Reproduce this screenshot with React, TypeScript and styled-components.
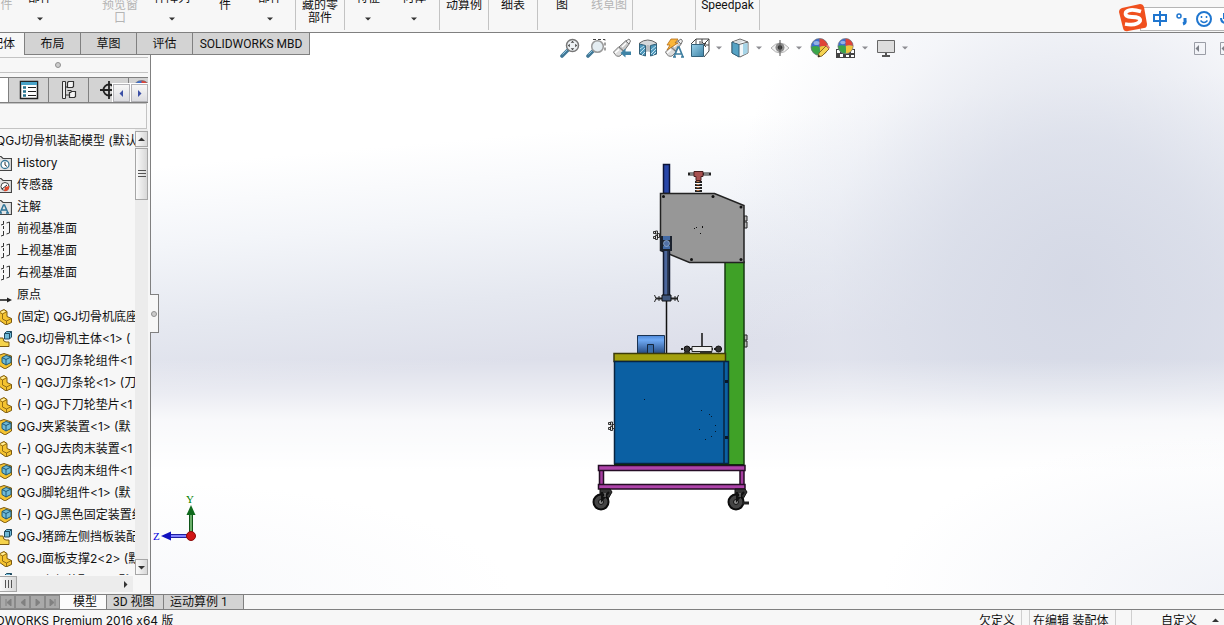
import React from "react";
import styled, { createGlobalStyle } from "styled-components";

const GlobalStyle = createGlobalStyle`
  * { box-sizing: border-box; }
  body {
    margin: 0;
    overflow: hidden;
    background: #f7f7f7;
    color: #111;
    font-family: Roboto, "Noto Sans CJK SC", sans-serif;
    font-size: 12px;
    line-height: 16px;
  }
  button {
    margin: 0;
    padding: 0;
    border: 0;
    background: none;
    color: inherit;
    font: inherit;
    white-space: nowrap;
  }
  svg { display: block; }
`;

const Window = styled.div`
  position: relative;
  display: grid;
  grid-template-rows: 33px minmax(0, 1fr) 16px 15px;
  height: 100vh;
  overflow: hidden;
`;

/* ---------- ribbon ---------- */

const Ribbon = styled.header`
  display: flex;
  height: 33px;
  padding-bottom: 2px;
  overflow: hidden;
  background: #f7f7f7;
  border-bottom: 1px solid #808080;
`;

const RibbonGroup = styled.div<{ $width: number }>`
  display: flex;
  flex: none;
  width: ${(p) => p.$width}px;
  border-right: 1px solid #c3c3c3;
`;

const RibbonButton = styled.button<{ $width: number; $muted?: boolean; $menu?: boolean }>`
  display: flex;
  flex: none;
  flex-direction: column;
  align-items: center;
  gap: 12px;
  width: ${(p) => p.$width}px;
  margin-top: ${(p) => (p.$menu ? -8 : -1)}px;
  color: ${(p) => (p.$muted ? "#b4b4b4" : "#111")};
  line-height: 13px;
  white-space: pre-line;
`;

type Command = { text: string; width: number; muted?: boolean; menu?: boolean };

const ribbon: { width: number; items: Command[] }[] = [
  {
    width: 296,
    items: [
      { text: "件", width: 13, muted: true },
      { text: "部件", width: 54, menu: true },
      { text: "", width: 29 },
      { text: "预览窗\n口", width: 48, muted: true },
      { text: "件阵列", width: 56, menu: true },
      { text: "件", width: 50 },
      { text: "部件", width: 40, menu: true },
    ],
  },
  { width: 49, items: [{ text: "藏的零\n部件", width: 48 }] },
  {
    width: 95,
    items: [
      { text: "特征", width: 46, menu: true },
      { text: "何体", width: 46, menu: true },
    ],
  },
  { width: 49, items: [{ text: "动算例", width: 48 }] },
  { width: 49, items: [{ text: "细表", width: 48 }] },
  {
    width: 95,
    items: [
      { text: "图", width: 48 },
      { text: "线草图", width: 46, muted: true },
    ],
  },
  { width: 63, items: [] },
  { width: 64, items: [{ text: "Speedpak", width: 63 }] },
];

const Caret = ({ color = "#333" }: { color?: string }) => (
  <svg width="6" height="4" viewBox="0 0 6 4" aria-hidden="true">
    <path d="M0 .5h6L3 3.5z" fill={color} />
  </svg>
);

/* ---------- input method bar ---------- */

const ImeBar = styled.div`
  position: absolute;
  top: 4px;
  right: 0;
  display: flex;
  width: 105px;
  height: 29px;
`;

const ImeKeys = styled.div`
  flex: 1;
  height: 24px;
  margin: 3px 0 0 -8px;
  overflow: hidden;
  background: #fff;
  border: 1px solid #b5b5b5;
  border-right: 0;
`;

const ImeBadge = styled.div`
  position: relative;
  z-index: 1;
`;

/* ---------- workspace ---------- */

const Workspace = styled.main`
  position: relative;
  display: flex;
  flex-direction: column;
  min-height: 0;
  background:
    radial-gradient(ellipse 28% 28% at 100% 100%, rgba(232, 235, 243, 0.6), rgba(255, 255, 255, 0)),
    radial-gradient(ellipse 30% 20% at 12% 100%, rgba(240, 242, 247, 0.5), rgba(255, 255, 255, 0)),
    linear-gradient(to bottom, rgba(255, 255, 255, 0) 58%, rgba(255, 255, 255, 0.4) 64%, rgba(255, 255, 255, 0.8) 69%, #fff 78%),
    radial-gradient(ellipse 29% 72% at 88% 44%, rgba(212, 216, 229, 0.95) 0%, rgba(216, 220, 232, 0.8) 35%, rgba(228, 231, 240, 0.4) 70%, rgba(255, 255, 255, 0) 100%),
    linear-gradient(175deg, #fff 22%, #f3f5f9 34%, #e5e8f0 46%, #dddfea 56%, #dddfea 100%);
`;

const TopRow = styled.div`
  display: flex;
  flex: none;
  height: 22px;
`;

const CommandTab = styled.button<{ $width: number; $active?: boolean }>`
  flex: none;
  width: ${(p) => p.$width}px;
  height: ${(p) => (p.$active ? 22 : 23)}px;
  margin-top: ${(p) => (p.$active ? 0 : -1)}px;
  overflow: hidden;
  background: ${(p) => (p.$active ? "#f7f7f7" : "#d3d3d3")};
  border: ${(p) => (p.$active ? 0 : "1px solid #808080")};
  border-left: 0;
  box-shadow: ${(p) => (p.$active ? "inset -1px 0 #808080" : "none")};
`;

const ActiveLabel = styled.span`
  display: block;
  margin-left: -9px;
  text-align: left;
`;

const ViewTools = styled.div`
  display: flex;
  flex: none;
  align-items: center;
  height: 20px;
  margin: 5px 0 0 247px;
`;

const ToolButton = styled.button`
  display: flex;
  justify-content: center;
  width: 26px;
`;

const MenuButton = styled.button`
  width: 14px;
  padding-left: 3px;
`;

const PaneButtons = styled.div`
  display: flex;
  gap: 14px;
  width: 30px;
  margin: 8px 0 0 auto;
  overflow: hidden;
  button { flex: none; }
`;

const Split = styled.div`
  display: flex;
  flex: 1;
  min-height: 0;
`;

const Panel = styled.aside`
  position: relative;
  display: flex;
  flex: none;
  flex-direction: column;
  width: 151px;
  padding: 2px 2px 0 0;
  background: #f7f7f7;
  border-right: 1px solid #808080;
`;

const Grip = styled.div`
  display: flex;
  flex: none;
  align-items: center;
  justify-content: center;
  height: 16px;
  padding-right: 32px;
  border: solid #c3c3c3;
  border-width: 1px 0;
`;

const Dot = styled.span`
  width: 6px;
  height: 6px;
  background: #ccc;
  border: 1px solid #909090;
  border-radius: 50%;
`;

const PanelTabs = styled.div`
  position: relative;
  display: flex;
  flex: none;
  height: 26px;
  margin-top: 4px;
  overflow: hidden;
  border: solid #808080;
  border-width: 1px 0;
`;

const PanelTab = styled.button<{ $width?: number }>`
  display: flex;
  flex: none;
  align-items: center;
  justify-content: center;
  width: ${(p) => p.$width ?? 40}px;
  background: ${(p) => (p.$width ? "#fff" : "#d3d3d3")};
  border-right: 1px solid #808080;
`;

const PeekTab = styled(PanelTab)`
  justify-content: flex-start;
  padding-left: 3px;
`;

const TabScroller = styled.div`
  position: absolute;
  right: 0;
  bottom: 0;
  display: flex;
  gap: 1px;
  padding: 1px 0 0 1px;
  background: #fff;
`;

const TabScrollButton = styled.button`
  display: flex;
  align-items: center;
  justify-content: center;
  width: 17px;
  height: 18px;
  background: linear-gradient(#f8f8f8, #dcdce0);
  border: 1px solid #b4b4b8;
`;

const Filter = styled.div`
  flex: none;
  height: 26px;
  margin-right: 1px;
  border: solid #c3c3c3;
  border-width: 1px 1px 1px 0;
`;

const TreeArea = styled.div`
  display: flex;
  flex: 1;
  min-height: 0;
  padding-bottom: 1px;
`;

const Tree = styled.ul`
  flex: 1;
  min-width: 0;
  margin: 0;
  padding: 1px 0 0;
  overflow: hidden;
  font-family: Inter, "Noto Sans CJK SC", sans-serif;
  list-style: none;
`;

const TreeRow = styled.li`
  display: flex;
  align-items: center;
  gap: 5px;
  height: 22px;
  margin-left: -4px;
  white-space: pre;
  svg { flex: none; }
`;

const VScroll = styled.div`
  display: flex;
  flex: none;
  flex-direction: column;
  width: 13px;
  padding-top: 2px;
  background: #ececec;
`;

const ScrollButton = styled.button`
  display: flex;
  flex: none;
  align-items: center;
  justify-content: center;
  height: 16px;
  background: linear-gradient(90deg, #fafafa, #d8d8d8);
  border: 1px solid #a6a6a6;
`;

const VThumb = styled(ScrollButton)`
  height: 52px;
  margin: 1px 0 auto;
`;

const HScroll = styled.div`
  display: flex;
  flex: none;
  align-items: center;
  justify-content: space-between;
  height: 16px;
  margin: 0 15px 2px 0;
  padding-right: 4px;
  background: #ececec;
`;

const HThumb = styled(ScrollButton)`
  width: 17px;
  border-left: 0;
`;

const Handle = styled.button`
  position: absolute;
  top: 239px;
  left: 150px;
  display: flex;
  align-items: center;
  width: 9px;
  height: 39px;
  padding-left: 1px;
  background: #f7f7f7;
  border: 1px solid #808080;
  border-left: 0;
`;

const Canvas = styled.section`
  position: relative;
  flex: 1;
`;

const Placed = styled.div<{ $left: number; $top: number }>`
  position: absolute;
  left: ${(p) => p.$left}px;
  top: ${(p) => p.$top}px;
`;

/* ---------- bottom bars ---------- */

const SheetBar = styled.nav`
  display: flex;
  background: #f7f7f7;
  border: solid #808080;
  border-width: 1px 0;
`;

const SheetNav = styled.button`
  display: flex;
  align-items: center;
  justify-content: center;
  width: 15px;
  background: #a9a9a9;
  border: 1px solid #8a8a8a;
`;

const SheetTab = styled.button<{ $width: number; $active?: boolean }>`
  width: ${(p) => p.$width}px;
  padding: ${(p) => (p.$active ? "0 0 0 4px" : "0 0 0 6px")};
  overflow: hidden;
  line-height: 12px;
  text-align: ${(p) => (p.$active ? "center" : "left")};
  background: ${(p) => (p.$active ? "#fbfbfb" : "#d3d3d3")};
  border-right: 1px solid #808080;
`;

const StatusBar = styled.footer`
  display: flex;
  height: 15px;
  overflow: hidden;
  font-family: Inter, "Noto Sans CJK SC", sans-serif;
  font-variant-ligatures: none;
  line-height: 21px;
  white-space: nowrap;
  background: #f7f7f7;
`;

const Product = styled.span`
  flex: 1;
  margin-left: -4px;
`;

const StatusCell = styled.span<{ $width: number }>`
  width: ${(p) => p.$width}px;
  height: 15px;
  padding-left: 3px;
  border-right: 1px solid #cfcfcf;
`;

const UnitsButton = styled.button`
  display: flex;
  align-items: center;
  justify-content: space-between;
  width: 92px;
  height: 21px;
  padding: 0 5px 0 29px;
`;

/* ---------- icons ---------- */

const Icon = ({ size = 20, children }: { size?: number; children: React.ReactNode }) => (
  <svg width={size} height={size} viewBox={`0 0 ${size} ${size}`} fill="none" aria-hidden="true">
    {children}
  </svg>
);

const ZoomFit = () => (
  <Icon>
    <path d="M2 18l6-6" stroke="#3f7796" strokeWidth="3.6" strokeLinecap="round" />
    <path d="M2.5 16.5l5-5" stroke="#8fc3dd" strokeWidth="1" />
    <circle cx="12.500" cy="7.500" r="6" fill="#eef2f5" stroke="#777" strokeWidth="1.500" />
    <path d="M12.500 2.800l1.800 2h-3.600zM12.500 12.200l1.800-2h-3.600zM7.800 7.500l2-1.800v3.600zM17.200 7.500l-2-1.800v3.600z" fill="#444" />
  </Icon>
);

const ZoomArea = () => (
  <Icon>
    <path d="M7 1.500h12v12" stroke="#444" strokeDasharray="3 2" />
    <path d="M2 18l5-5" stroke="#3f7796" strokeWidth="3.600" strokeLinecap="round" />
    <path d="M2.500 16.500l4-4" stroke="#8fc3dd" />
    <circle cx="11.500" cy="8.500" r="5.800" fill="#e4edf2" stroke="#999" strokeWidth="1.500" />
  </Icon>
);

const Scope = () => (
  <>
    <path d="M1.500 14l5-5 5.500 5-4 4q-4 1.500-6.500-4z" fill="#ddd" stroke="#777" />
    <path d="M7 9l7-6.500 3.500 3L12 13z" fill="#c8c8c8" stroke="#777" />
    <path d="M14 3l3-2 1.500 2-1.500 3z" fill="#eee" stroke="#777" />
    <path d="M3 15l4-3.500M10 9l4-4" stroke="#fff" strokeWidth="1.500" />
  </>
);

const PrevView = () => (
  <Icon>
    <Scope />
    <path d="M8.500 15l5-4.500v3H19v3.500h-5.500v2.500z" fill="#3f84a6" />
  </Icon>
);

const Section = () => (
  <Icon>
    <path d="M1.500 5q8-6 17 0v11l-6 1V9q-3-2-5 0v8l-6-1z" fill="#d6d8da" stroke="#666" />
    <path d="M7.500 8.500q2.500-3 5 0v6q-2.500-2-5 0z" fill="#b9bdc0" />
    <path d="M1.500 6l6 1.500V18l-6-2zM12.500 7.500l6-1.500v10l-6 2z" fill="#4d97bb" stroke="#33617a" />
    <path d="M2 11l4-3M2 15l5-5M4 17l3-3M13 12l5-4M13 16l5-5M15 17l3-3" stroke="#c4e2ef" />
  </Icon>
);

const Dynamic = () => (
  <Icon>
    <Scope />
    <path d="M7 1h7l-3 4h3L3 12l3-5H3z" fill="#fbb63a" stroke="#b16d1c" strokeWidth=".8" />
    <path d="M10 19l4-10h1l4 10M12 16h5M9 19h3M17 19h3" stroke="#3d7d9f" strokeWidth="1.700" />
  </Icon>
);

const Orientation = () => (
  <Icon>
    <path d="M1 6l5-5h13v12l-5 6M14 6l5-5M6 1v5M12 1v8M19 7h-5M10 6V3" stroke="#444" />
    <path d="M1.500 6.500h12v12h-12z" fill="url(#orientFace)" stroke="#33617a" />
    <path d="M12 4l2 2 2-2M16 9l-2-2 2-2" stroke="#444" />
    <defs>
      <linearGradient id="orientFace" x2="1" y2="1">
        <stop stopColor="#9bd2ea" />
        <stop offset="1" stopColor="#3e83a6" />
      </linearGradient>
    </defs>
  </Icon>
);

const Display = () => (
  <Icon>
    <path d="M2 4l8-3 8 3v11l-8 4-8-4z" fill="#f3f7f9" stroke="#666" />
    <path d="M2 4l7 2.500V19l-7-4z" fill="#55a2c4" stroke="#33617a" />
    <path d="M9 6.500L18 4" stroke="#666" />
    <path d="M13 6v11l4.500-2V5z" fill="#a5d4e7" />
    <path d="M3 4l7-2 3 1-4 2.500z" fill="#d9dcde" />
  </Icon>
);

const Eye = () => (
  <Icon>
    <path d="M1 10q9-10 18 0-9 10-18 0z" fill="#f2f2f2" stroke="#b0b0b0" />
    <circle cx="10" cy="9.500" r="4.500" fill="#8b8b8b" />
    <circle cx="10" cy="9.500" r="2.200" fill="#333" />
    <path d="M10 2v16" stroke="#555" />
  </Icon>
);

const Ball = () => (
  <g>
    <circle cx="9.500" cy="9" r="8.500" fill="#3b6fd0" />
    <path d="M9.500 9V.5a8.500 8.500 0 0 1 8.500 8.500q-4-2-8.500 0z" fill="#e04438" />
    <path d="M9.500 9q4-2 8.500 0a8.500 8.500 0 0 1-8.500 8.500q1-4 0-8.500z" fill="#f1c63c" />
    <path d="M9.500 9q-4-2-8.500 0a8.500 8.500 0 0 0 8.500 8.500q1-4 0-8.500z" fill="#3ba548" />
    <circle cx="9.500" cy="9" r="8.500" stroke="#777" strokeWidth=".7" />
    <ellipse cx="6.500" cy="5" rx="3" ry="2" fill="#fff" opacity=".45" />
  </g>
);

const Appearance = () => (
  <Icon>
    <Ball />
    <path d="M8 19l1-4 7-7 3 3-7 7z" fill="#f5d352" stroke="#7a5b20" strokeWidth=".9" />
    <path d="M16 8l1.500-1.500 2.500 3-1 1.500z" fill="#e47f76" />
    <path d="M8 19l.6-2.400 1.800 1.800z" fill="#222" />
  </Icon>
);

const Scene = () => (
  <Icon>
    <path d="M0 11h19v9H0z" fill="#444" />
    <path d="M1 12h3v3H1zM15 12h3v3h-3zM4 16h3v3H4zM10 17h3v2h-3zM15 17h3v2h-3z" fill="#fff" />
    <g transform="translate(1 0) scale(.9)">
      <Ball />
    </g>
  </Icon>
);

const Monitor = () => (
  <Icon>
    <path d="M1.500 2.500h17v12h-17z" fill="#ddd" stroke="#666" />
    <path d="M10 15v2M6 18h8" stroke="#555" strokeWidth="2" />
  </Icon>
);

const PaneIcon = () => (
  <svg width="12" height="13" viewBox="0 0 12 13" fill="none" aria-hidden="true">
    <path d="M.5.5h11v12H.5z" stroke="#9a9da6" />
    <path d="M5 3v7L1.500 6.500z" fill="#7d8088" />
  </svg>
);

const Arrow = ({ dir, color = "#333" }: { dir: "left" | "right" | "up" | "down"; color?: string }) => {
  const d = { left: "M5 0v7L1.500 3.500z", right: "M2 0v7l3.500-3.500z", up: "M0 5h7L3.500 1.500z", down: "M0 2h7L3.500 5.500z" }[dir];
  return (
    <svg width="7" height="7" viewBox="0 0 7 7" aria-hidden="true">
      <path d={d} fill={color} />
    </svg>
  );
};

const Bars = ({ upright }: { upright?: boolean }) => (
  <svg width="8" height="8" viewBox="0 0 8 8" stroke="#555" aria-hidden="true">
    <path d={upright ? "M1.500 0v8M4.500 0v8M7.500 0v8" : "M0 .5h8M0 3.500h8M0 6.500h8"} />
  </svg>
);

const folder = <path d="M-1 1.500h6l2 2h8.500v12H-1z" fill="#e4e4e4" stroke="#444" strokeWidth="1.200" />;

const treeIcons: Record<string, React.ReactNode> = {
  history: (
    <>
      {folder}
      <circle cx="9" cy="9.500" r="4" fill="#fff" stroke="#3b7897" strokeWidth="1.300" />
      <path d="M9 7v3l2 1.500" stroke="#333" />
    </>
  ),
  sensor: (
    <>
      {folder}
      <circle cx="9" cy="9.500" r="4" fill="#fff" stroke="#444" />
      <path d="M13 9a4 4 0 0 1-5 5l1-4z" fill="#e0492d" />
      <path d="M6 12l5-4" stroke="#222" />
    </>
  ),
  note: (
    <>
      {folder}
      <path d="M4 14l3.500-8h1L12 14M6 11h4M3 14h3M10 14h3" stroke="#2f7498" strokeWidth="1.500" />
    </>
  ),
  plane: <path d="M13.500 1v11M13.500 1l-3 1M8 3L5 4M2 5v2M2 9v3M13.500 12l-3 1M8 14l-3 1M7.500 0v3m0 2v3m0 2v4" stroke="#333" />,
  origin: (
    <>
      <path d="M0 13h12" stroke="#222" strokeWidth="1.600" />
      <path d="M11 10.500l5 2.500-5 2.500z" fill="#222" />
    </>
  ),
  part: (
    <>
      <path d="M3 3l5-2.500 3 2v5l4.500 2v4L10 16 3 11z" fill="#f5c330" stroke="#7c5a10" />
      <path d="M3 3l3.500 2v5l4 2M6.500 5L11 2.500M10.500 12l5-2.500M10.500 12v4" stroke="#7c5a10" strokeWidth=".8" />
      <path d="M4.500 3l3.500-1.500L9.500 2.500 6.500 4z" fill="#fff0a5" />
    </>
  ),
  assembly: (
    <>
      <path d="M1 3l7-2.500 7.500 2.500v9L9 16l-8-5z" fill="#f5c330" stroke="#7c5a10" />
      <path d="M6 4.500l4-2 5 1.500v5.500l-5 2.500-4-2.500z" fill="#70bad8" stroke="#1e5876" />
      <path d="M6 4.500l4 2 5-2.500M10 6.500V12" stroke="#1e5876" />
    </>
  ),
  flexible: (
    <>
      <path d="M1 7h6q0 4 3 4h3v4.500H1z" fill="#f5d34b" stroke="#7c5a10" />
      <path d="M8.500 2.500l2-2h5v5.500l-2 2h-5z" fill="#70bad8" stroke="#1e4a60" />
      <path d="M8.500 2.500h5l2-2M13.500 2.500V8" stroke="#1e4a60" />
    </>
  ),
};

const tree: { kind?: string; text: string }[] = [
  { text: "QGJ切骨机装配模型 (默认" },
  { kind: "history", text: "History" },
  { kind: "sensor", text: "传感器" },
  { kind: "note", text: "注解" },
  { kind: "plane", text: "前视基准面" },
  { kind: "plane", text: "上视基准面" },
  { kind: "plane", text: "右视基准面" },
  { kind: "origin", text: "原点" },
  { kind: "part", text: "(固定) QGJ切骨机底座" },
  { kind: "flexible", text: "QGJ切骨机主体<1> (" },
  { kind: "assembly", text: "(-) QGJ刀条轮组件<1" },
  { kind: "part", text: "(-) QGJ刀条轮<1> (刀" },
  { kind: "part", text: "(-) QGJ下刀轮垫片<1" },
  { kind: "assembly", text: "QGJ夹紧装置<1> (默" },
  { kind: "part", text: "(-) QGJ去肉末装置<1" },
  { kind: "assembly", text: "(-) QGJ去肉末组件<1" },
  { kind: "assembly", text: "QGJ脚轮组件<1> (默" },
  { kind: "assembly", text: "(-) QGJ黑色固定装置组" },
  { kind: "flexible", text: "QGJ猪蹄左侧挡板装配" },
  { kind: "part", text: "QGJ面板支撑2<2> (默" },
  { kind: "flexible", text: "QGJ上部装配<1> (默" },
];

/* ---------- model ---------- */

const Caster = ({ x }: { x: number }) => (
  <g transform={`translate(${x} 0)`}>
    <path d="M-1 489h10l2 3-4 7-8 4z" fill="#333" stroke="#111" />
    <circle cx="0" cy="502" r="7.500" fill="#444" stroke="#0c0c0c" strokeWidth="2" />
    <circle cx="0" cy="502" r="2.500" fill="#888" stroke="#111" />
    <path d="M1 492v8l7-8" stroke="#111" strokeWidth="2" />
    <path d="M4 493v4" stroke="#999" />
  </g>
);

const Clip = ({ x, y }: { x: number; y: number }) => (
  <g transform={`translate(${x} ${y})`}>
    <path d="M0 1h2v2H0zM0 6h2v2H0zM2 .5h2v3H2zM2 5h2v4H2zM4 3h2v4H4z" fill="#ddd" stroke="#222" strokeWidth=".9" />
  </g>
);

const Machine = () => (
  <svg width="170" height="355" viewBox="590 160 170 355" fill="none" role="img" aria-label="切骨机侧视图">
    <defs>
      <linearGradient id="motor" x2="0" y2="1">
        <stop stopColor="#4d87d6" />
        <stop offset=".25" stopColor="#6faaf5" />
        <stop offset="1" stopColor="#254a82" />
      </linearGradient>
    </defs>
    <path d="M663.500 164.500h6v29h-6z" fill="#2846a8" stroke="#0c1438" strokeWidth="1.500" />
    <path d="M688 174h23" stroke="#222" strokeWidth="3" />
    <path d="M690 174h4M704 174h5" stroke="#ddd" />
    <path d="M694 171.500h9v5h-2v4h-5v-4h-2z" fill="#a85050" stroke="#491e1e" />
    <path d="M698.500 181v12" stroke="#222" strokeWidth="7" strokeDasharray="2 1" />
    <path d="M698 181v12" stroke="#b77447" strokeWidth="3" strokeDasharray="1 2" />
    <path d="M744 216h3v5h-3zM744 222h3v6h-3zM744 335h3v5h-3zM744 341h3v6h-3z" fill="#bbb" stroke="#222" />
    <path d="M725 262h19v203h-19z" fill="#3fa127" stroke="#173b12" strokeWidth="1.500" />
    <path d="M660.500 193.500h54l29.500 12v57h-54.500l-29-12z" fill="#979797" stroke="#222" strokeWidth="1.500" />
    <g fill="#111">
      <circle cx="663.500" cy="196.500" r="1.500" />
      <circle cx="713" cy="196.500" r="1.500" />
      <circle cx="741" cy="207" r="1.500" />
      <circle cx="741" cy="259.500" r="1.500" />
      <circle cx="691.500" cy="259.500" r="1.500" />
      <path d="M694 228h1v1h-1zM702 226h1v2h-1zM700 233h1v1h-1zM696 227h1v1h-1z" />
    </g>
    <Clip x={653.5} y={230.5} />
    <path d="M663.500 250h6v46h-6z" fill="#4b669c" stroke="#111a30" strokeWidth="1.500" />
    <path d="M668 250v46" stroke="#111" />
    <path d="M660 236h12v15h-12z" fill="#1b222e" />
    <path d="M663 236h7v4h-7zM663 246h7v3h-7z" fill="#426aa5" />
    <circle cx="666.500" cy="243.500" r="3" fill="#5271a5" stroke="#a1bad8" strokeWidth=".7" />
    <path d="M656 298.500h22" stroke="#222" strokeWidth="2" />
    <path d="M654.500 295q3 3.500 0 7M678.500 295q-3 3.500 0 7M659 296v5M675 296v5" stroke="#222" />
    <path d="M662 295h9v6h-9z" fill="#40577d" stroke="#111" />
    <path d="M666.500 301v52" stroke="#111" strokeWidth="1.500" />
    <path d="M637.500 335.500h27v18h-27z" fill="url(#motor)" stroke="#1b3352" />
    <path d="M647.500 344.500h6v9h-6z" fill="#396caa" stroke="#15263d" />
    <path d="M702 333v13" stroke="#111" strokeWidth="1.500" />
    <path d="M681 349h41" stroke="#222" strokeWidth="2" strokeDasharray="2 1" />
    <circle cx="687" cy="349" r="3" fill="#333" stroke="#111" />
    <circle cx="718.500" cy="349" r="3" fill="#333" stroke="#111" />
    <path d="M692 346.500h20v5h-20z" fill="#eee" stroke="#222" />
    <path d="M684 352.500h6M700 352.500h12" stroke="#333" strokeWidth="2" />
    <path d="M614 353.500h111.500v8H614z" fill="#a3a00d" stroke="#3c3b0a" strokeWidth="1.500" />
    <path d="M614.500 361.500h114v102h-114z" fill="#0b60a3" stroke="#082441" strokeWidth="1.500" />
    <path d="M724 362v101" stroke="#082441" strokeWidth="1.500" />
    <path d="M725 380h3v3h-3zM725 436h3v3h-3zM644 399h1v1h-1zM701 410h1v1h-1zM709 414h1v1h-1zM711 416h1v1h-1zM715 425h1v1h-1zM715 431h1v1h-1zM699 429h1v1h-1zM705 439h1v1h-1zM711 436h1v1h-1z" fill="#07182a" />
    <Clip x={608.5} y={421.5} />
    <path d="M599.500 469h4v17h-4zM740 469h4v17h-4z" fill="#a63ea0" stroke="#250d25" strokeWidth="1.500" />
    <path d="M598.500 465.500H745v5H598.500zM598.500 484.500H745v4.500H598.500z" fill="#ae43aa" stroke="#250d25" strokeWidth="1.500" />
    <path d="M614 464.500h130" stroke="#0d2a0b" />
    <Caster x={601} />
    <Caster x={736} />
    <path d="M742 503h7" stroke="#222" strokeWidth="3" />
  </svg>
);

const AxisLabel = styled.text`
  font-family: "Liberation Serif", serif;
  font-size: 11px;
`;

const Triad = () => (
  <svg width="50" height="52" viewBox="150 492 50 52" aria-hidden="true">
    <path d="M189.500 513h3v23h-3z" fill="#6bb06b" stroke="#0f5519" />
    <path d="M186.500 515l4.500-10 4.500 10z" fill="#0f6a1d" />
    <path d="M169 534.500h22v3h-22z" fill="#8080ff" stroke="#2020a0" />
    <path d="M171 531.500v9l-10-4.500z" fill="#1111c0" />
    <circle cx="191" cy="536" r="4.500" fill="#d01515" stroke="#8c0a0a" />
    <AxisLabel x="186" y="503" fill="#008000">Y</AxisLabel>
    <AxisLabel x="153" y="540" fill="#0000e0">Z</AxisLabel>
  </svg>
);

const viewTools: { name: string; icon: React.ReactNode; menu?: boolean }[] = [
  { name: "整屏显示全图", icon: <ZoomFit /> },
  { name: "局部放大", icon: <ZoomArea /> },
  { name: "上一视图", icon: <PrevView /> },
  { name: "剖面视图", icon: <Section /> },
  { name: "动态注解视图", icon: <Dynamic /> },
  { name: "视图定向", icon: <Orientation />, menu: true },
  { name: "显示样式", icon: <Display />, menu: true },
  { name: "隐藏项目", icon: <Eye />, menu: true },
  { name: "编辑外观", icon: <Appearance /> },
  { name: "应用布景", icon: <Scene />, menu: true },
  { name: "视图设定", icon: <Monitor />, menu: true },
];

export default function App() {
  return (
    <Window>
      <GlobalStyle />
      <Ribbon>
        {ribbon.map((group, i) => (
          <RibbonGroup key={i} $width={group.width}>
            {group.items.map((c, j) =>
              c.text ? (
                <RibbonButton key={j} $width={c.width} $muted={c.muted} $menu={c.menu}>
                  {c.text}
                  {c.menu && <Caret />}
                </RibbonButton>
              ) : (
                <RibbonButton key={j} $width={c.width} aria-label="配合" />
              ),
            )}
          </RibbonGroup>
        ))}
      </Ribbon>

      <Workspace>
        <TopRow>
          <CommandTab $width={25} $active>
            <ActiveLabel>配体</ActiveLabel>
          </CommandTab>
          <CommandTab $width={56}>布局</CommandTab>
          <CommandTab $width={56}>草图</CommandTab>
          <CommandTab $width={56}>评估</CommandTab>
          <CommandTab $width={117}>SOLIDWORKS MBD</CommandTab>
          <ViewTools>
            {viewTools.map((t) => (
              <React.Fragment key={t.name}>
                <ToolButton aria-label={t.name}>{t.icon}</ToolButton>
                {t.menu && (
                  <MenuButton aria-label={`${t.name}菜单`}>
                    <Caret color="#8d8d92" />
                  </MenuButton>
                )}
              </React.Fragment>
            ))}
          </ViewTools>
          <PaneButtons>
            <button aria-label="折叠窗格"><PaneIcon /></button>
            <button aria-label="展开窗格"><PaneIcon /></button>
          </PaneButtons>
        </TopRow>

        <Split>
          <Panel>
            <Grip><Dot /></Grip>
            <PanelTabs>
              <PanelTab $width={9} aria-label="特征树" />
              <PanelTab aria-label="属性">
                <Icon>
                  <path d="M1.500 1.500h17v17h-17z" fill="#fff" stroke="#222" strokeWidth="1.500" />
                  <path d="M2 2h16v3H2z" fill="#49a3c8" />
                  <path d="M4 7.500h3M4 11.500h3M4 15.500h3" stroke="#26738f" strokeWidth="2.500" />
                  <path d="M9 7.500h8M9 11.500h8M9 15.500h8" stroke="#222" />
                </Icon>
              </PanelTab>
              <PanelTab aria-label="配置">
                <Icon>
                  <path d="M3.500 1.500h3v17h-3zM6.500 7h4M6.500 15h4" stroke="#333" fill="#eee" />
                  <path d="M8.500 2.500l1-1h5v5l-1 1h-5zM11.500 12.500l1-1h4v5l-1 1h-5v-5zM8.500 10.500h4" fill="#f4f4f4" stroke="#333" strokeWidth="1.200" />
                </Icon>
              </PanelTab>
              <PanelTab aria-label="尺寸专家">
                <Icon>
                  <circle cx="10" cy="10" r="5.500" stroke="#222" strokeWidth="1.800" />
                  <path d="M10 1v18M1 10h18" stroke="#222" strokeWidth="1.800" />
                </Icon>
              </PanelTab>
              <PeekTab aria-label="显示"><Icon><Ball /></Icon></PeekTab>
              <TabScroller>
                <TabScrollButton aria-label="向左"><Arrow dir="left" color="#3b4fa5" /></TabScrollButton>
                <TabScrollButton aria-label="向右"><Arrow dir="right" color="#3b4fa5" /></TabScrollButton>
              </TabScroller>
            </PanelTabs>
            <Filter />
            <TreeArea>
              <Tree>
                {tree.map((row, i) => (
                  <TreeRow key={i}>
                    {row.kind && <Icon size={16}>{treeIcons[row.kind]}</Icon>}
                    <span>{row.text}</span>
                  </TreeRow>
                ))}
              </Tree>
              <VScroll>
                <ScrollButton aria-label="向上"><Arrow dir="up" /></ScrollButton>
                <VThumb aria-label="垂直滚动"><Bars /></VThumb>
                <ScrollButton aria-label="向下"><Arrow dir="down" /></ScrollButton>
              </VScroll>
            </TreeArea>
            <HScroll>
              <HThumb aria-label="水平滚动"><Bars upright /></HThumb>
              <Arrow dir="right" />
            </HScroll>
            <Handle aria-label="折叠面板"><Dot /></Handle>
          </Panel>
          <Canvas>
            <Placed $left={439} $top={105}><Machine /></Placed>
            <Placed $left={-1} $top={437}><Triad /></Placed>
          </Canvas>
        </Split>
      </Workspace>

      <SheetBar>
        {["M3 0v7M8 0v7L4 3.500z", "M7 0v7L3 3.500z", "M3 0v7l4-3.500z", "M2 0v7l4-3.500zM7 0v7"].map((d, i) => (
          <SheetNav key={d} aria-label={["首个", "前一个", "后一个", "末个"][i]}>
            <svg width="9" height="7" viewBox="0 0 9 7" fill="#808080" stroke="#808080" aria-hidden="true">
              <path d={d} />
            </svg>
          </SheetNav>
        ))}
        <SheetTab $width={47} $active>模型</SheetTab>
        <SheetTab $width={57}>3D 视图</SheetTab>
        <SheetTab $width={80}>运动算例 1</SheetTab>
      </SheetBar>

      <StatusBar>
        <Product>DWORKS Premium 2016 x64 版</Product>
        <StatusCell $width={46}>欠定义</StatusCell>
        <StatusCell $width={8} />
        <StatusCell $width={86}>在编辑 装配体</StatusCell>
        <StatusCell $width={16} />
        <UnitsButton>
          自定义 <Arrow dir="up" />
        </UnitsButton>
      </StatusBar>

      <ImeBar>
        <ImeBadge>
          <svg width="29" height="29" viewBox="0 0 29 29" fill="none" aria-hidden="true">
            <path d="M3 4l18-4q3 0 4 3l3 17q0 4-3 4L9 27q-4 1-5-3L0 8q0-3 3-4z" fill="#f0501e" />
            <path d="M22 7.500Q11 4 7 8q-2 5 6 5 9 0 8 4-3 5-15 3" stroke="#fff" strokeWidth="3.800" />
          </svg>
        </ImeBadge>
        <ImeKeys>
          <svg width="85" height="22" viewBox="1141 8 85 22" fill="none" stroke="#1f76cf" strokeWidth="2" aria-hidden="true">
            <path d="M1154 15h12v6h-12zM1160 11v15" />
            <circle cx="1179" cy="16" r="2" strokeWidth="1.500" />
            <path d="M1185 18v2q1 3-2 4" strokeWidth="3" />
            <circle cx="1204" cy="19" r="7" />
            <path d="M1201.500 16v2M1206.500 16v2M1200.500 20.500q3.500 4 7 0" strokeWidth="1.500" />
            <path d="M1221 18q0 5 5 5M1224 13v6" />
          </svg>
        </ImeKeys>
      </ImeBar>
    </Window>
  );
}
